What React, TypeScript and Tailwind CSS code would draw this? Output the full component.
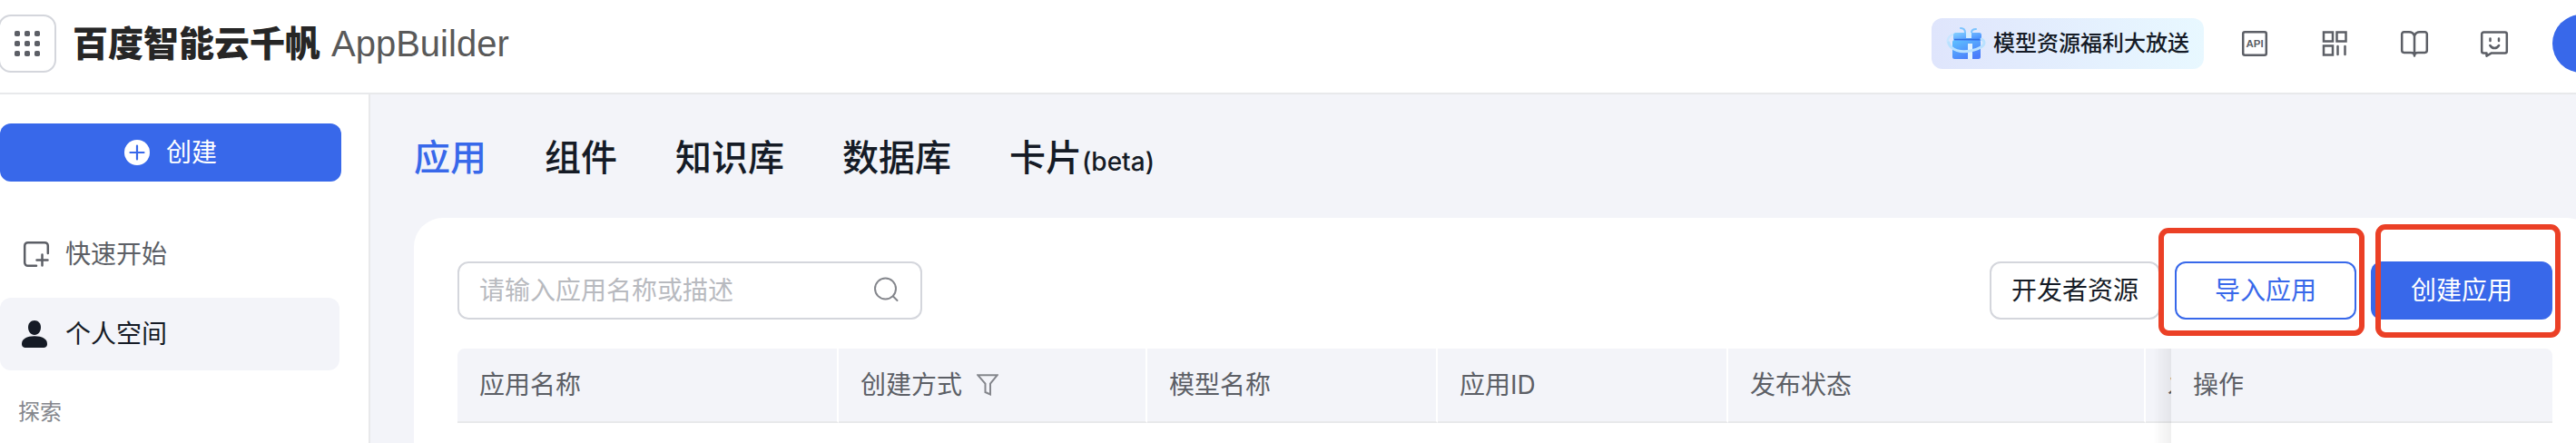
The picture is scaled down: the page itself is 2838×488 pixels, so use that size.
import type { ReactNode } from "react";

function Icon({ size, box, children }: { size: string; box: string; children: ReactNode }) {
  return (
    <svg
      viewBox={box}
      className={`${size} shrink-0`}
      fill="none"
      stroke="currentColor"
      strokeWidth={2.5}
      strokeLinecap="round"
      strokeLinejoin="round"
      aria-hidden="true"
    >
      {children}
    </svg>
  );
}

function GiftIcon() {
  return (
    <svg viewBox="0 0 44 36" className="h-9 w-11 shrink-0" fill="none" aria-hidden="true">
      <defs>
        <linearGradient id="giftLid" x1="0" y1="0" x2="1" y2="1">
          <stop offset="0" stopColor="#86d2ff" />
          <stop offset="1" stopColor="#3f83ff" />
        </linearGradient>
        <linearGradient id="giftBox" x1="0" y1="0" x2="0.6" y2="1">
          <stop offset="0" stopColor="#5fc3ff" />
          <stop offset="1" stopColor="#4a7dfb" />
        </linearGradient>
      </defs>
      <path d="M7 8C1 11 0 17 5 21" stroke="#c9e6ff" strokeWidth="2.5" strokeLinecap="round" />
      <path d="M16 1c4 0 5 3 5 5M33 2c-4 0-5 2-5 4" stroke="#7cc4ff" strokeWidth="2" strokeLinecap="round" />
      <rect x="7" y="14" width="31" height="21" rx="2.5" fill="url(#giftBox)" />
      <rect x="8" y="6" width="31" height="9" rx="2.5" fill="url(#giftLid)" />
      <path d="M9 13.5h29" stroke="#2f70e0" strokeWidth="1.4" />
      <rect x="22" y="6" width="6" height="6" fill="#d6edff" />
      <rect x="24" y="18" width="5" height="17" fill="#e0f1ff" />
      <path d="M3 17c2 9 14 11 24 9 9-2 15-5 15-9 0-2-1-3-3-4" stroke="#b9e1ff" strokeWidth="3" strokeLinecap="round" />
    </svg>
  );
}

function Header() {
  return (
    <header className="flex shrink-0 items-center justify-between border-b-2 border-[#e8e9eb] bg-white pt-4 pb-[22px]">
      <div className="flex items-center">
        <button
          type="button"
          aria-label="全部产品"
          className="-ml-0.5 flex size-16 items-center justify-center rounded-[14px] border-2 border-[#d4d6dc] text-[#5c5f66]"
        >
          <svg viewBox="0 0 28 28" className="size-7" fill="currentColor" aria-hidden="true">
            {[0, 11, 22].map((y) =>
              [0, 11, 22].map((x) => <rect key={`${x}-${y}`} x={x} y={y} width="6" height="6" rx="1.8" />),
            )}
          </svg>
        </button>
        <h1 className="ml-[18px] flex items-center gap-3 whitespace-nowrap">
          <span className="text-[39px] leading-[64px] font-black text-[#262626]">百度智能云千帆</span>
          <span className="font-['Liberation_Sans',sans-serif] text-[40px] leading-[64px] font-normal text-[#595959]">
            AppBuilder
          </span>
        </h1>
      </div>
      <div className="flex items-center text-[#5c5f66]">
        <a
          href="#promo"
          className="mr-10 flex h-14 items-center gap-2 rounded-xl bg-linear-to-r from-[#dfe5fc] to-[#e8f8ff] px-4 text-2xl font-medium text-[#151b26]"
        >
          <GiftIcon />
          模型资源福利大放送
        </a>
        <nav aria-label="工具" className="flex gap-14">
          <a href="#api" aria-label="API">
            <Icon size="size-8" box="0 0 32 32">
              <rect x="3.2" y="3.2" width="25.6" height="25.6" rx="2" />
              <text
                x="16"
                y="20.2"
                textAnchor="middle"
                fontSize="11.5"
                fontWeight="700"
                fontFamily="Liberation Sans, sans-serif"
                fill="currentColor"
                stroke="none"
              >
                API
              </text>
            </Icon>
          </a>
          <a href="#apps" aria-label="二维码">
            <Icon size="size-8" box="0 0 32 32">
              <rect x="4" y="3.5" width="10" height="10" strokeLinejoin="miter" />
              <rect x="18.5" y="3.5" width="10" height="10" strokeLinejoin="miter" />
              <rect x="4" y="18.5" width="10" height="10" strokeLinejoin="miter" />
              <path d="M19.5 19v9M27.5 19v9" />
            </Icon>
          </a>
          <a href="#docs" aria-label="文档">
            <Icon size="size-8" box="0 0 32 32">
              <path d="M16 7.5c-1-2.8-3.4-4.2-6-4.2H4.5a2.3 2.3 0 0 0-2.3 2.3v18a2.3 2.3 0 0 0 2.3 2.3H12c2.5 0 4 1.2 4 3.6 0-2.4 1.5-3.6 4-3.6h7.5a2.3 2.3 0 0 0 2.3-2.3v-18a2.3 2.3 0 0 0-2.3-2.3H22c-2.6 0-5 1.4-6 4.2zM16 7.5v22" />
            </Icon>
          </a>
          <a href="#feedback" aria-label="反馈">
            <Icon size="size-8" box="0 0 32 32">
              <path d="M4.2 3.5h23.600a2 2 0 0 1 2 2v18.900a2 2 0 0 1-2 2H13l-5.500 3.200v-3.200H4.200a2 2 0 0 1-2-2V5.500a2 2 0 0 1 2-2z" />
              <path d="M11.500 10.500v2.500M21 10.500v2.500M11.300 18c1.200 2 2.900 3 4.900 3s3.700-1 4.900-3" />
            </Icon>
          </a>
        </nav>
        <button type="button" aria-label="账户" className="ml-12 -mr-[38px] size-16 rounded-full bg-[#3868ea]" />
      </div>
    </header>
  );
}

function Sidebar() {
  return (
    <aside className="w-[408px] shrink-0 border-r-2 border-[#e8e9eb] bg-white pt-8 pr-[30px] text-[28px] leading-10">
      <button
        type="button"
        className="flex h-16 w-full items-center justify-center gap-[18px] rounded-xl bg-[#3868ea] text-white"
      >
        <svg viewBox="0 0 28 28" className="size-7" aria-hidden="true">
          <circle cx="14" cy="14" r="14" fill="#fff" />
          <path d="M14 6.5v15M6.500 14h15" stroke="#3868ea" strokeWidth="2.2" strokeLinecap="round" />
        </svg>
        创建
      </button>
      <nav aria-label="主导航" className="mt-10 mr-0.5 flex flex-col gap-2">
        <a href="#start" className="flex h-20 items-center gap-4 rounded-xl pl-6 text-[#5c5f66]">
          <Icon size="size-8" box="0 0 32 32">
            <path d="M28.800 15V6.700a3.500 3.500 0 0 0-3.500-3.500H6.700a3.500 3.500 0 0 0-3.500 3.500v18.600a3.500 3.500 0 0 0 3.500 3.500H16M22.500 16.500v12M16.500 22.500h12" />
          </Icon>
          快速开始
        </a>
        <a href="#space" className="flex h-20 items-center gap-4 rounded-xl bg-[#f3f4f9] pl-6 text-[#151b26]">
          <svg viewBox="0 0 32 32" className="size-8 shrink-0" fill="currentColor" aria-hidden="true">
            <path d="M14 1c4.200 0 7 3.300 7 7.500 0 4.700-2.800 8.500-7 8.500s-7-3.800-7-8.500C7 4.300 9.800 1 14 1z" />
            <path d="M14 18.200c8.500 0 14 3 14 8.500 0 3.200-1.800 4.300-4.500 4.300h-19C1.800 31 0 29.900 0 26.700c0-5.500 5.500-8.500 14-8.500z" />
          </svg>
          个人空间
        </a>
      </nav>
      <h2 className="mt-[26px] pl-5 text-2xl leading-10 font-normal text-[#84868c]">探索</h2>
    </aside>
  );
}

function Tabs() {
  return (
    <nav aria-label="资源类型" className="flex h-[60px] gap-16 text-[40px] leading-[60px] font-medium text-[#151b26]">
      <a href="#app" aria-current="page" className="text-[#3868ea]">应用</a>
      <a href="#component">组件</a>
      <a href="#knowledge">知识库</a>
      <a href="#database">数据库</a>
      <a href="#card">
        卡片<span className="text-[28px] leading-none">(beta)</span>
      </a>
    </nav>
  );
}

function Toolbar() {
  return (
    <div className="flex items-center justify-between text-[28px]">
      <label className="flex h-16 w-[512px] items-center justify-between rounded-xl border-2 border-[#d4d6dc] pr-[22px] pl-[22px] text-[#84868c]">
        <input
          type="text"
          aria-label="搜索应用"
          placeholder="请输入应用名称或描述"
          className="h-full min-w-0 flex-1 bg-transparent text-[#151b26] outline-none placeholder:text-[#b8babf]"
        />
        <Icon size="size-8" box="0 0 32 32">
          <circle cx="15.500" cy="14" r="11.500" strokeWidth="2" />
          <path d="M24 22.500l4.500 4.500" strokeWidth="2" />
        </Icon>
      </label>
      <div className="flex gap-4">
        <button type="button" className="h-16 rounded-xl border-2 border-[#d4d6dc] px-[22px] text-[#151b26]">
          开发者资源
        </button>
        <div className="relative">
          <button type="button" className="h-16 w-[200px] rounded-xl border-2 border-[#3868ea] text-[#3868ea]">
            导入应用
          </button>
          <span className="pointer-events-none absolute -top-[37px] -right-[9px] -bottom-[18px] -left-[18px] rounded-[11px] border-6 border-[#eb4026]" />
        </div>
        <div className="relative">
          <button type="button" className="h-16 w-[200px] rounded-xl bg-[#3868ea] text-white">
            创建应用
          </button>
          <span className="pointer-events-none absolute -top-[41px] -right-[9px] -bottom-[20px] left-[5px] rounded-[11px] border-6 border-[#eb4026]" />
        </div>
      </div>
    </div>
  );
}

const TH = "h-[82px] border-r-2 border-b-2 border-r-white border-b-[#e8e9eb] bg-[#f3f4f9] px-6 text-left font-normal";
const STICKY =
  "sticky right-0 before:absolute before:top-0 before:-bottom-0.5 before:right-full before:w-5 before:bg-linear-to-l before:from-black/6 before:to-transparent";

function AppTable() {
  return (
    <div className="overflow-hidden rounded-t-lg">
      <table className="w-[2520px] min-w-full table-fixed border-separate border-spacing-0 text-[28px] leading-10 whitespace-nowrap text-[#5c5f66]">
        <colgroup>
          <col className="w-[420px]" />
          <col className="w-[340px]" />
          <col className="w-[320px]" />
          <col className="w-[320px]" />
          <col className="w-[460px]" />
          <col className="w-[240px]" />
          <col className="w-[420px]" />
        </colgroup>
        <thead>
          <tr>
            <th className={TH}>应用名称</th>
            <th className={TH}>
              <div className="flex items-center gap-4">
                创建方式
                <button type="button" aria-label="筛选" className="text-[#84868c]">
                  <Icon size="size-6" box="0 0 24 24">
                    <path d="M1.200 1.200h21.600l-7.800 9.500v11.800l-5.500-2.500v-9.300z" strokeWidth="2" strokeLinejoin="miter" />
                  </Icon>
                </button>
              </div>
            </th>
            <th className={TH}>模型名称</th>
            <th className={TH}>应用ID</th>
            <th className={TH}>发布状态</th>
            <th className={TH}>发</th>
            <th className={`${STICKY} h-[82px] border-b-2 border-[#e8e9eb] bg-[#f3f4f9] px-6 text-left font-normal`}>操作</th>
          </tr>
        </thead>
        <tbody>
          <tr>
            <td colSpan={6} className="h-28" />
            <td className={`${STICKY} bg-white`} />
          </tr>
        </tbody>
      </table>
    </div>
  );
}

export default function App() {
  return (
    <div className="flex h-screen flex-col overflow-hidden bg-[#f3f4f9] font-['Inter','Noto_Sans_CJK_SC',sans-serif]">
      <Header />
      <div className="flex min-h-0 flex-1">
        <Sidebar />
        <main className="flex min-w-0 flex-1 flex-col overflow-hidden pt-10 pl-12">
          <Tabs />
          <section className="mt-9 -mr-[22px] flex flex-1 flex-col gap-8 rounded-t-[32px] bg-white px-12 pt-12">
            <Toolbar />
            <AppTable />
          </section>
        </main>
      </div>
    </div>
  );
}
